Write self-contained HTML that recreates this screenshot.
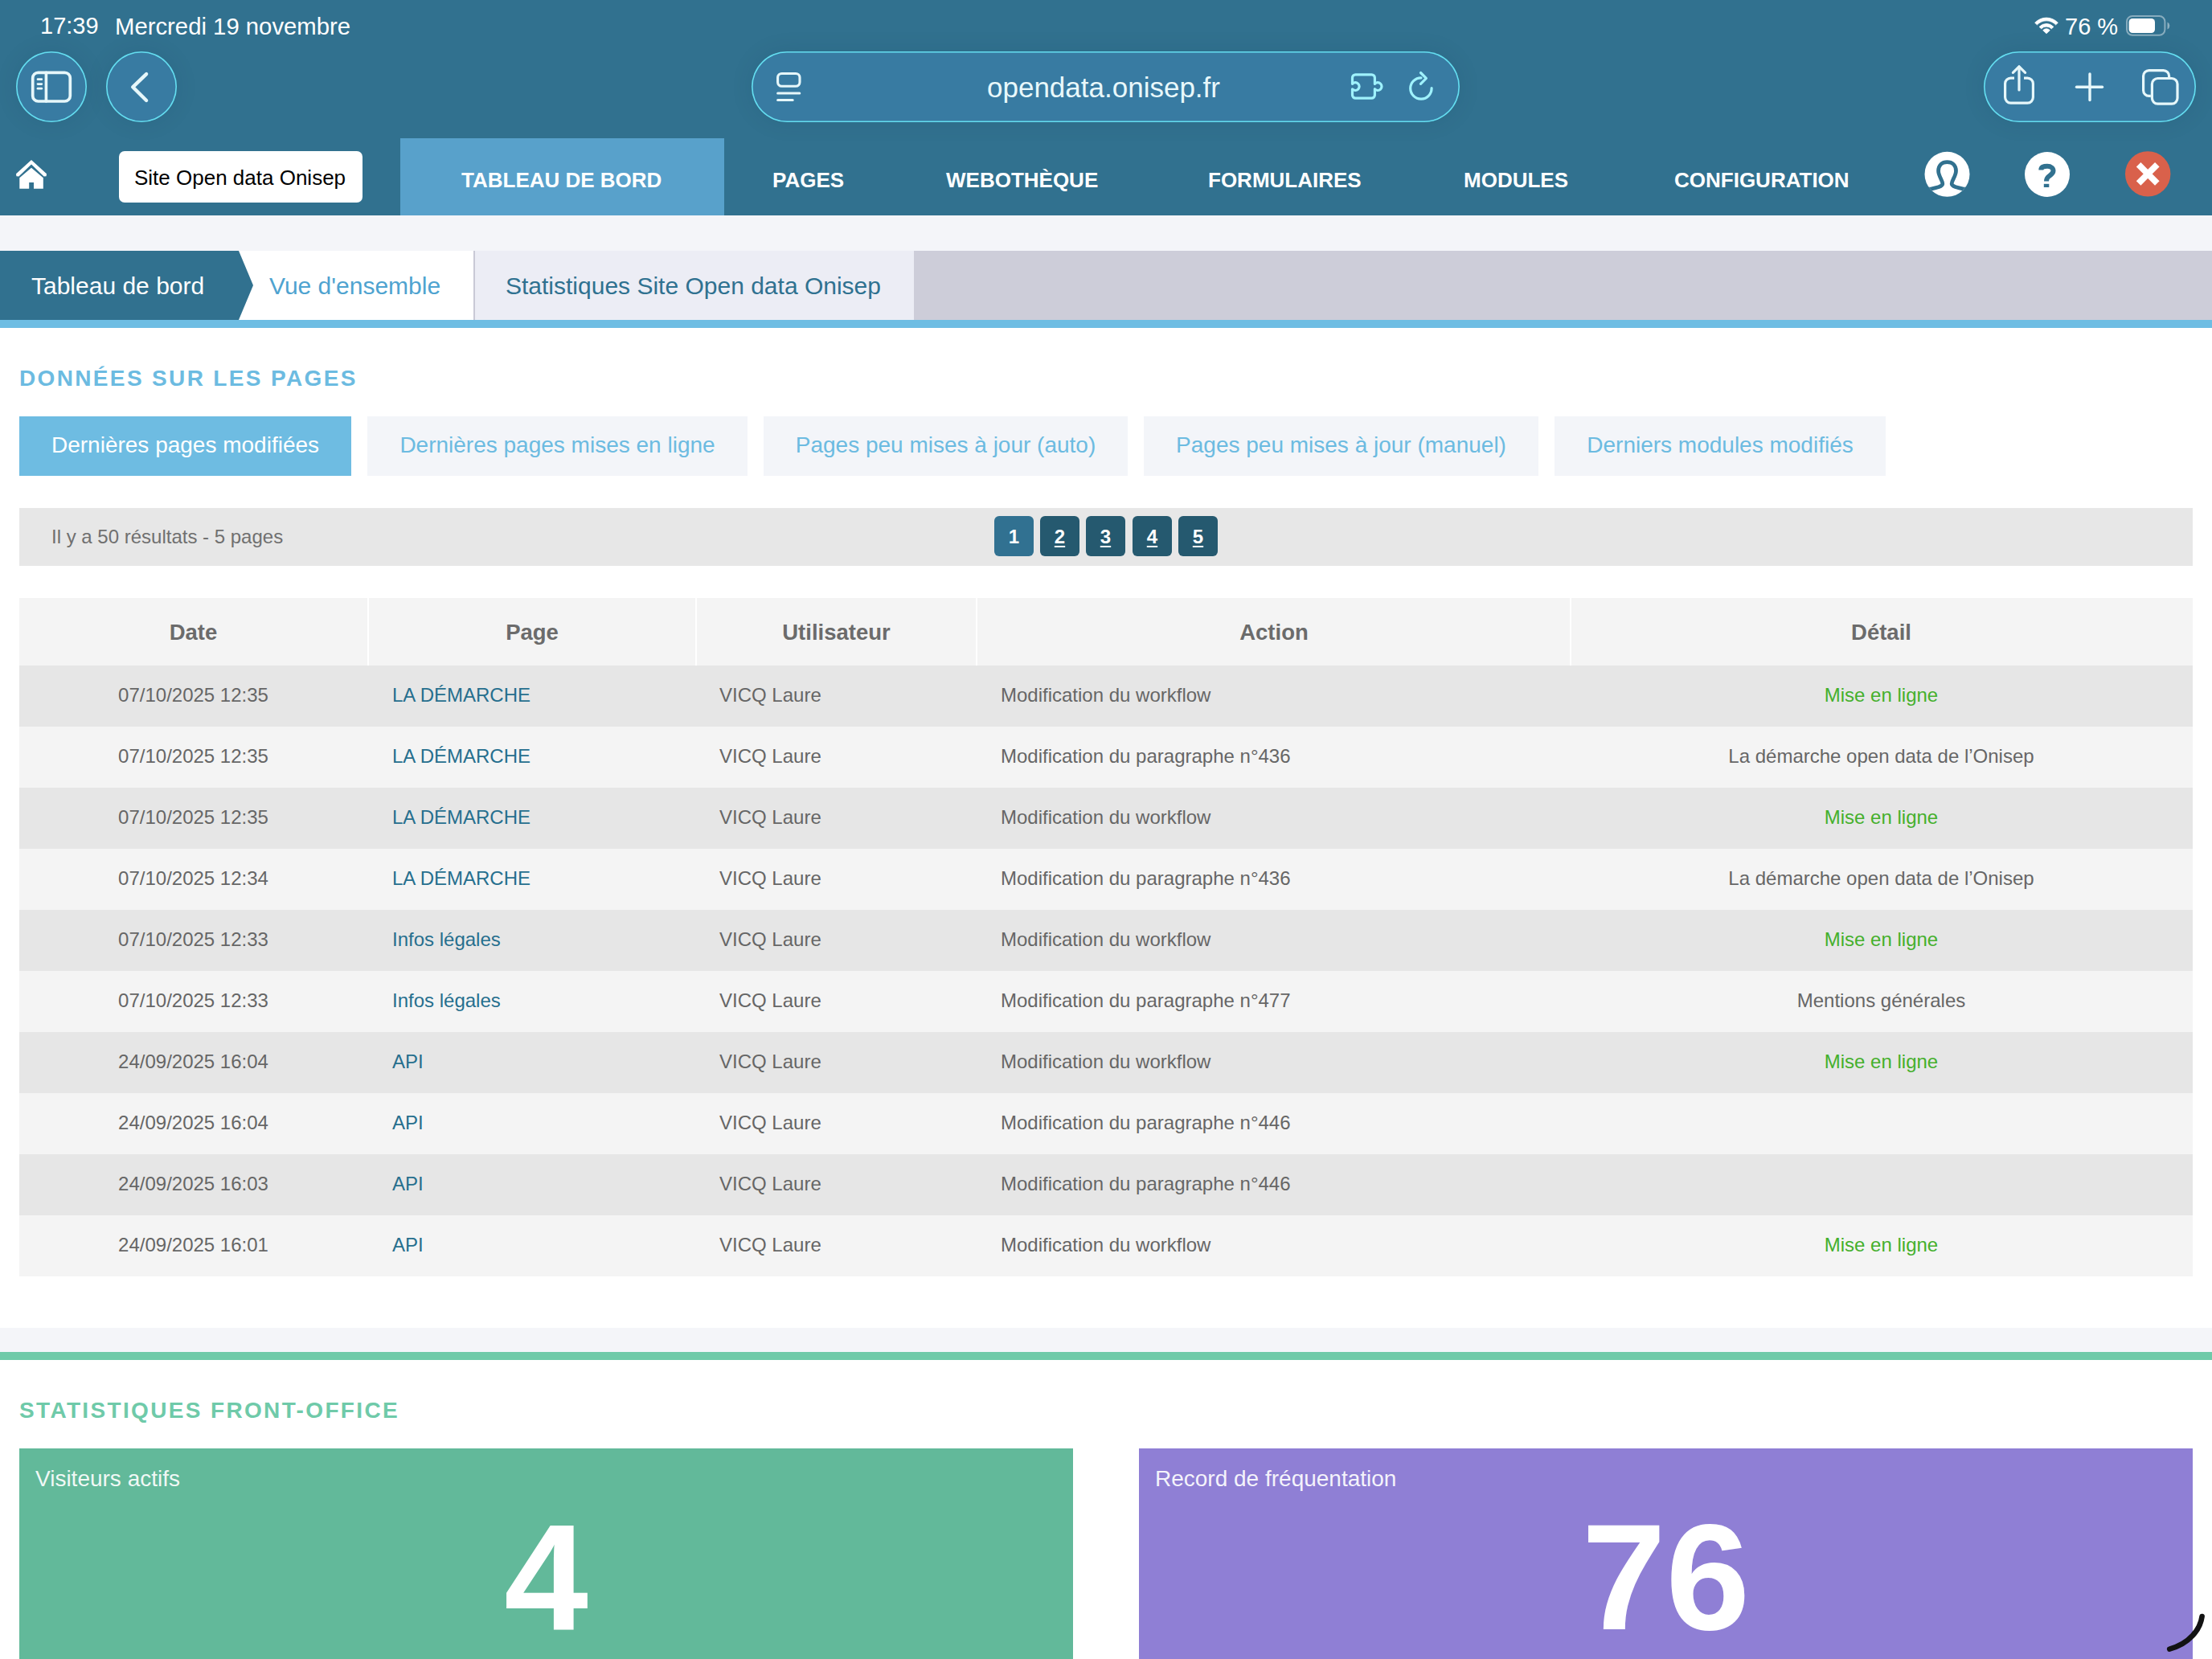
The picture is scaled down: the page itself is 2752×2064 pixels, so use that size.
<!DOCTYPE html>
<html lang="fr"><head><meta charset="utf-8"><title>Tableau de bord</title>
<style>
*{margin:0;padding:0;box-sizing:border-box}
html,body{width:2752px;height:2064px;overflow:hidden;background:#fff}
body{position:relative;font-family:"Liberation Sans",sans-serif}
.a{position:absolute}
.t{position:absolute;line-height:1;white-space:nowrap}
.c{text-align:center}
#top{left:0;top:0;width:2752px;height:268px;background:#31718f}
.pill{position:absolute;background:#387ba2;border-radius:44px;box-shadow:inset 0 0 0 1.6px #64def0,0 0 28px rgba(20,50,70,0.10)}
.nav{font-size:26px;font-weight:bold;color:#fff;top:211px}
.bc{font-size:30px;top:341px}
.btn{position:absolute;top:518px;height:74px;background:#f3f5f9}
.btn span{position:absolute;left:0;right:0;text-align:center;top:22px;line-height:1;font-size:28px;color:#6cbbe1;white-space:nowrap}
.pg{position:absolute;top:642px;width:49px;height:50px;border-radius:6px;background:#25596f;color:#fff;font-weight:bold;font-size:24px;line-height:1;text-align:center}
.pg span{position:absolute;left:0;right:0;top:14px;text-decoration:underline;text-decoration-thickness:2px;text-underline-offset:3px}
.row{position:absolute;left:24px;width:2704px;height:76px}
.row .t{font-size:24px;top:25px;color:#666}
.d{left:0;width:433px;text-align:center}
.p{left:464px;color:#266f8e!important}
.u{left:871px}
.ac{left:1221px}
.de{left:1931px;width:771px;text-align:center}
.gr{color:#45b02c!important}
.hd .t{font-size:27.5px;font-weight:bold;color:#6b6b6b;top:29px}
</style></head>
<body>
<div id="top" class="a"></div>

<!-- status bar -->
<div class="t" style="left:50px;top:18px;font-size:29px;color:#fff">17:39</div>
<div class="t" style="left:143px;top:18px;font-size:29.3px;color:#fff">Mercredi 19 novembre</div>

<!-- toolbar pills -->
<div class="pill" style="left:20px;top:64px;width:88px;height:88px"></div>
<div class="pill" style="left:132px;top:64px;width:88px;height:88px"></div>
<div class="pill" style="left:935px;top:64px;width:881px;height:88px"></div>
<div class="pill" style="left:2468px;top:64px;width:264px;height:88px"></div>
<div class="t" style="left:1228px;top:91px;font-size:35px;color:#e8f8fb">opendata.onisep.fr</div>

<!-- nav -->
<div class="a" style="left:498px;top:172px;width:403px;height:96px;background:#58a1cb"></div>
<div class="a" style="left:148px;top:188px;width:303px;height:64px;background:#fff;border-radius:7px"></div>
<div class="t" style="left:167px;top:208px;font-size:26px;color:#000">Site Open data Onisep</div>
<div class="t nav" style="left:574px">TABLEAU DE BORD</div>
<div class="t nav" style="left:961px">PAGES</div>
<div class="t nav" style="left:1177px">WEBOTHÈQUE</div>
<div class="t nav" style="left:1503px">FORMULAIRES</div>
<div class="t nav" style="left:1821px">MODULES</div>
<div class="t nav" style="left:2083px">CONFIGURATION</div>

<!-- gray band + breadcrumb -->
<div class="a" style="left:0;top:268px;width:2752px;height:44px;background:#f4f5f9"></div>
<div class="a" style="left:0;top:312px;width:2752px;height:86px;background:#cdcdd9"></div>
<div class="a" style="left:0;top:312px;width:589px;height:86px;background:#fff"></div>
<div class="a" style="left:589px;top:312px;width:2px;height:86px;background:#c9c9d6"></div>
<div class="a" style="left:591px;top:312px;width:546px;height:86px;background:#ecedf5"></div>
<svg class="a" style="left:0;top:312px" width="320" height="86"><polygon points="0,0 297,0 315,43 297,86 0,86" fill="#31718f"/></svg>
<div class="a" style="left:0;top:398px;width:2752px;height:10px;background:#6ebde3"></div>
<div class="t bc" style="left:39px;color:#fff">Tableau de bord</div>
<div class="t bc" style="left:335px;color:#4fa3d0">Vue d'ensemble</div>
<div class="t bc" style="left:629px;color:#2f7190">Statistiques Site Open data Onisep</div>

<!-- heading -->
<div class="t" style="left:24px;top:457px;font-size:28px;font-weight:bold;letter-spacing:2.35px;color:#6cbbe1">DONNÉES SUR LES PAGES</div>

<!-- buttons -->
<div class="btn" style="left:24px;width:413px;background:#6ebce2"><span style="color:#fff">Dernières pages modifiées</span></div>
<div class="btn" style="left:457px;width:473px"><span>Dernières pages mises en ligne</span></div>
<div class="btn" style="left:950px;width:453px"><span>Pages peu mises à jour (auto)</span></div>
<div class="btn" style="left:1423px;width:491px"><span>Pages peu mises à jour (manuel)</span></div>
<div class="btn" style="left:1934px;width:412px"><span>Derniers modules modifiés</span></div>

<!-- pager -->
<div class="a" style="left:24px;top:632px;width:2704px;height:72px;background:#e7e7e7"></div>
<div class="t" style="left:64px;top:656px;font-size:24px;color:#707070">Il y a 50 résultats - 5 pages</div>
<div class="pg" style="left:1237px;background:#317191"><span style="text-decoration:none">1</span></div>
<div class="pg" style="left:1294px"><span>2</span></div>
<div class="pg" style="left:1351px"><span>3</span></div>
<div class="pg" style="left:1409px"><span>4</span></div>
<div class="pg" style="left:1466px"><span>5</span></div>

<!-- table -->
<div class="row hd" style="top:744px;height:84px;background:#f4f4f4">
  <div class="t d">Date</div>
  <div class="t" style="left:435px;width:406px;text-align:center">Page</div>
  <div class="t" style="left:843px;width:347px;text-align:center">Utilisateur</div>
  <div class="t" style="left:1192px;width:738px;text-align:center">Action</div>
  <div class="t de">Détail</div>
  <div class="a" style="left:433px;top:0;width:2px;height:84px;background:#fff"></div>
  <div class="a" style="left:841px;top:0;width:2px;height:84px;background:#fff"></div>
  <div class="a" style="left:1190px;top:0;width:2px;height:84px;background:#fff"></div>
  <div class="a" style="left:1929px;top:0;width:2px;height:84px;background:#fff"></div>
</div>
<!--ROWS-->
<div class="row" style="top:828px;background:#e6e6e6"><div class="t d">07/10/2025 12:35</div><div class="t p">LA DÉMARCHE</div><div class="t u">VICQ Laure</div><div class="t ac">Modification du workflow</div><div class="t de gr">Mise en ligne</div></div>
<div class="row" style="top:904px;background:#f4f4f4"><div class="t d">07/10/2025 12:35</div><div class="t p">LA DÉMARCHE</div><div class="t u">VICQ Laure</div><div class="t ac">Modification du paragraphe n°436</div><div class="t de">La démarche open data de l’Onisep</div></div>
<div class="row" style="top:980px;background:#e6e6e6"><div class="t d">07/10/2025 12:35</div><div class="t p">LA DÉMARCHE</div><div class="t u">VICQ Laure</div><div class="t ac">Modification du workflow</div><div class="t de gr">Mise en ligne</div></div>
<div class="row" style="top:1056px;background:#f4f4f4"><div class="t d">07/10/2025 12:34</div><div class="t p">LA DÉMARCHE</div><div class="t u">VICQ Laure</div><div class="t ac">Modification du paragraphe n°436</div><div class="t de">La démarche open data de l’Onisep</div></div>
<div class="row" style="top:1132px;background:#e6e6e6"><div class="t d">07/10/2025 12:33</div><div class="t p">Infos légales</div><div class="t u">VICQ Laure</div><div class="t ac">Modification du workflow</div><div class="t de gr">Mise en ligne</div></div>
<div class="row" style="top:1208px;background:#f4f4f4"><div class="t d">07/10/2025 12:33</div><div class="t p">Infos légales</div><div class="t u">VICQ Laure</div><div class="t ac">Modification du paragraphe n°477</div><div class="t de">Mentions générales</div></div>
<div class="row" style="top:1284px;background:#e6e6e6"><div class="t d">24/09/2025 16:04</div><div class="t p">API</div><div class="t u">VICQ Laure</div><div class="t ac">Modification du workflow</div><div class="t de gr">Mise en ligne</div></div>
<div class="row" style="top:1360px;background:#f4f4f4"><div class="t d">24/09/2025 16:04</div><div class="t p">API</div><div class="t u">VICQ Laure</div><div class="t ac">Modification du paragraphe n°446</div><div class="t de"></div></div>
<div class="row" style="top:1436px;background:#e6e6e6"><div class="t d">24/09/2025 16:03</div><div class="t p">API</div><div class="t u">VICQ Laure</div><div class="t ac">Modification du paragraphe n°446</div><div class="t de"></div></div>
<div class="row" style="top:1512px;background:#f4f4f4"><div class="t d">24/09/2025 16:01</div><div class="t p">API</div><div class="t u">VICQ Laure</div><div class="t ac">Modification du workflow</div><div class="t de gr">Mise en ligne</div></div>
<!--/ROWS-->

<!-- bottom stats -->
<div class="a" style="left:0;top:1652px;width:2752px;height:30px;background:#f4f5f9"></div>
<div class="a" style="left:0;top:1682px;width:2752px;height:10px;background:#6fcaa9"></div>
<div class="t" style="left:24px;top:1741px;font-size:28px;font-weight:bold;letter-spacing:2.35px;color:#6fcaa9">STATISTIQUES FRONT-OFFICE</div>
<div class="a" style="left:24px;top:1802px;width:1311px;height:262px;background:#62b99a"></div>
<div class="a" style="left:1417px;top:1802px;width:1311px;height:262px;background:#8f7fd5"></div>
<div class="t" style="left:44px;top:1826px;font-size:28px;color:rgba(255,255,255,0.92)">Visiteurs actifs</div>
<div class="t" style="left:1437px;top:1826px;font-size:28px;color:rgba(255,255,255,0.92)">Record de fréquentation</div>
<div class="t c" style="left:24px;width:1311px;top:1868px;font-size:188px;font-weight:bold;color:#fff">4</div>
<div class="t c" style="left:1417px;width:1311px;top:1868px;font-size:188px;font-weight:bold;color:#fff">76</div>
<svg class="a" style="left:2690px;top:2000px" width="62" height="64"><path d="M49.6,11 C47.5,27 34,45 9.2,51.6" stroke="#121212" stroke-width="6.6" fill="none" stroke-linecap="round"/></svg>
<!--ICONS-->
<svg class="a" style="left:0;top:0" width="2752" height="270" viewBox="0 0 2752 270">
 <g fill="none" stroke="#e6f7fa" stroke-linecap="round" stroke-linejoin="round">
  <!-- sidebar -->
  <rect x="40.7" y="90.3" width="46.6" height="35.7" rx="6.8" stroke-width="3.7"/>
  <line x1="57.4" y1="90.3" x2="57.4" y2="126" stroke-width="3.6"/>
  <line x1="47" y1="98.7" x2="51.8" y2="98.7" stroke-width="2.7"/>
  <line x1="47" y1="104.6" x2="51.8" y2="104.6" stroke-width="2.7"/>
  <line x1="47" y1="110.2" x2="51.8" y2="110.2" stroke-width="2.7"/>
  <!-- back -->
  <polyline points="182.1,92.1 165.2,108.3 182.1,125" stroke-width="4.4"/>
  <!-- reader -->
  <rect x="967.6" y="91.5" width="27.4" height="15.8" rx="5" stroke-width="3.1"/>
  <line x1="967.6" y1="116" x2="994.8" y2="116" stroke-width="3"/>
  <line x1="967.6" y1="124.4" x2="986.2" y2="124.4" stroke-width="3"/>
  <!-- share -->
  <path d="M2506,97.1 H2501.6 A7,7 0 0 0 2494.6,104.1 V121.1 A7,7 0 0 0 2501.6,128.1 H2522.4 A7,7 0 0 0 2529.4,121.1 V104.1 A7,7 0 0 0 2522.4,97.1 H2518" stroke-width="3.2" stroke-linecap="butt"/>
  <line x1="2512" y1="83" x2="2512" y2="112" stroke-width="3.2"/>
  <polyline points="2504.4,90.4 2512,82.8 2519.6,90.4" stroke-width="3.2"/>
  <!-- plus -->
  <line x1="2583.5" y1="108.2" x2="2615.5" y2="108.2" stroke-width="3.4"/>
  <line x1="2600" y1="92" x2="2600" y2="124.5" stroke-width="3.4"/>
  <!-- tabs -->
  <path d="M2698.6,95.9 V94.6 A7,7 0 0 0 2691.6,87.6 H2673.6 A7,7 0 0 0 2666.6,94.6 V112.4 A7,7 0 0 0 2673.6,119.4 H2675.8" stroke-width="3.2" stroke-linecap="butt"/>
  <rect x="2677.4" y="97.5" width="31.6" height="31.6" rx="7" stroke-width="3.2"/>
 </g>
 <g fill="none" stroke="#9ff2fc" stroke-width="3.2" stroke-linecap="round" stroke-linejoin="round">
  <!-- puzzle -->
  <path d="M1682.5,104.4 V96.8 A4,4 0 0 1 1686.5,92.8 H1706.4 A4,4 0 0 1 1710.4,96.8 V104.4 A4.9,4.9 0 1 1 1710.4,110.8 V118.2 A4,4 0 0 1 1706.4,122.2 H1686.5 A4,4 0 0 1 1682.5,118.2 V110.8 A4.9,4.9 0 1 0 1682.5,104.4 Z"/>
  <!-- reload -->
  <path d="M1768,96.8 A13.2,13.2 0 1 0 1781.1,109.6"/>
  <polyline points="1767.5,90.5 1774.4,97.3 1767.5,104.3"/>
 </g>
 <!-- status icons -->
 <g fill="#fff" stroke="#fff" stroke-width="0.8" stroke-linejoin="round">
  <path d="M2546,41.7 L2541.69,37.68 A5.9,5.9 0 0 1 2550.31,37.68 Z"/>
  <path d="M2537.08,33.38 A12.2,12.2 0 0 1 2554.92,33.38 L2552.29,35.83 A8.6,8.6 0 0 0 2539.71,35.83 Z"/>
  <path d="M2531.67,28.33 A19.6,19.6 0 0 1 2560.33,28.33 L2557.62,30.86 A15.9,15.9 0 0 0 2534.38,30.86 Z"/>
 </g>
 <text x="2569" y="42.6" font-family="Liberation Sans" font-size="29" fill="#fff">76 %</text>
 <rect x="2646" y="20" width="47.4" height="23.8" rx="7" fill="none" stroke="#fff" stroke-opacity="0.42" stroke-width="2"/>
 <rect x="2648.6" y="23" width="32.4" height="18" rx="4.5" fill="#fff"/>
 <path d="M2696.5,27.5 A5,5 0 0 1 2696.5,36.5 Z" fill="#fff" fill-opacity="0.45"/>
 <!-- home -->
 <g fill="#fff">
  <polygon points="39,199 58,216.3 57.6,219.3 54.6,219.6 39,204.6 23.4,219.6 20.4,219.3 20,216.3"/>
  <polygon points="24.3,221.3 39,208.8 53.8,221.3 53.8,234.7 42,234.7 42,227.1 36.2,227.1 36.2,234.7 24.3,234.7"/>
 </g>
 <!-- user -->
 <defs><clipPath id="uc"><circle cx="2422.5" cy="216.8" r="28"/></clipPath></defs>
 <g clip-path="url(#uc)">
  <rect x="2390" y="185" width="70" height="70" fill="#fff"/>
  <path d="M2390,233.2 L2401.5,235.4 C2410,233.5 2416.5,232 2416.8,228.8 C2417,224.5 2411.5,219 2411.6,212.5 C2411.8,205.5 2416,201.7 2422.5,201.7 C2429,201.7 2433.3,205.5 2433.5,212.5 C2433.6,219 2428,224.5 2428.2,228.8 C2428.5,232 2435,233.5 2443.5,235.4 L2455,233.2" fill="none" stroke="#31718f" stroke-width="4.8" stroke-linejoin="round"/>
 </g>
 <!-- help -->
 <circle cx="2547" cy="217" r="28" fill="#fff"/>
 <path d="M2539.3,211.6 C2539.3,208 2542.5,206.8 2547,206.8 C2551.8,206.8 2554.5,209.3 2554.5,212.6 C2554.5,216 2551.5,217.6 2549,219.4 C2546.8,221 2546,222.5 2546,225.5" fill="none" stroke="#31718f" stroke-width="6"/>
 <rect x="2542.8" y="228.8" width="6.5" height="4.2" fill="#31718f"/>
 <!-- close -->
 <circle cx="2672.2" cy="216.4" r="28.2" fill="#d9614b"/>
 <g stroke="#fff" stroke-width="7.8">
  <line x1="2660.6" y1="204.8" x2="2683.8" y2="228"/>
  <line x1="2683.8" y1="204.8" x2="2660.6" y2="228"/>
 </g>
</svg>
</body></html>
